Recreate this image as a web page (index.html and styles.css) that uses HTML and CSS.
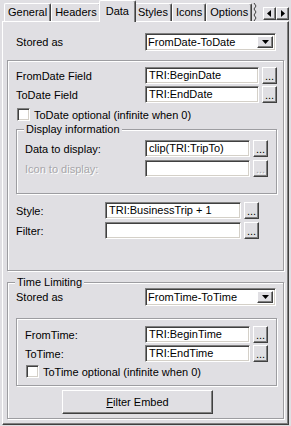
FILE: index.html
```html
<!DOCTYPE html>
<html lang="en">
<head>
  <meta charset="UTF-8" />
  <title>Data</title>
  <link rel="stylesheet" href="styles.css">
</head>
<body>

<div class="tabs">
  <div class="tab">General</div>
  <div class="tab">Headers</div>
  <div class="tab tab-active">Data</div>
  <div class="tab">Styles</div>
  <div class="tab">Icons</div>
  <div class="tab">Options</div>
  <svg class="tab-cut" width="5" height="18" viewBox="0 0 5 18">
    <polyline points="1,0 3,3 1,6 3,9 1,12 3,15 1,18" fill="none" stroke="#404040" stroke-width="1"/>
  </svg>
  <div class="tab-scroll">
    <span class="arrow-btn">
      <svg width="5" height="7" viewBox="0 0 5 7"><polygon points="4,0 4,7 0,3.5" fill="#000"/></svg>
    </span>
    <span class="arrow-btn">
      <svg width="5" height="7" viewBox="0 0 5 7"><polygon points="1,0 1,7 5,3.5" fill="#000"/></svg>
    </span>
  </div>
</div>

<div class="panel">
  <div class="row row-combo first-row">
    <span class="label label-wide">Stored as</span>
    <div class="combo">
      <span class="combo-text">FromDate-ToDate</span>
      <span class="combo-btn">
        <svg width="7" height="4" viewBox="0 0 7 4"><polygon points="0,0 7,0 3.5,4" fill="#000"/></svg>
      </span>
    </div>
  </div>

  <div class="group group-dates">
    <div class="row">
      <span class="label label-wide">FromDate Field</span>
      <div class="field field-long">TRI:BeginDate</div>
      <span class="btn btn-browse">...</span>
    </div>
    <div class="row row-next">
      <span class="label label-wide">ToDate Field</span>
      <div class="field field-long">TRI:EndDate</div>
      <span class="btn btn-browse">...</span>
    </div>
    <div class="check-row check-row-dates">
      <span class="check"></span>
      <span>ToDate optional (infinite when 0)</span>
    </div>

    <div class="group group-inner group-display">
      <span class="caption">Display information</span>
      <div class="row">
        <span class="label label-inner">Data to display:</span>
        <div class="field field-short">clip(TRI:TripTo)</div>
        <span class="btn btn-browse">...</span>
      </div>
      <div class="row row-spaced">
        <span class="label label-inner disabled">Icon to display:</span>
        <div class="field field-short"></div>
        <span class="btn btn-browse disabled">...</span>
      </div>
    </div>

    <div class="row row-style">
      <span class="label label-short">Style:</span>
      <div class="field field-style">TRI:BusinessTrip + 1</div>
      <span class="btn btn-browse">...</span>
    </div>
    <div class="row row-spaced">
      <span class="label label-short">Filter:</span>
      <div class="field field-style"></div>
      <span class="btn btn-browse">...</span>
    </div>
  </div>

  <div class="group group-time">
    <span class="caption">Time Limiting</span>
    <div class="row row-combo row-combo-grouped">
      <span class="label label-wide">Stored as</span>
      <div class="combo">
        <span class="combo-text">FromTime-ToTime</span>
        <span class="combo-btn">
          <svg width="7" height="4" viewBox="0 0 7 4"><polygon points="0,0 7,0 3.5,4" fill="#000"/></svg>
        </span>
      </div>
    </div>

    <div class="group group-inner group-times">
      <div class="row">
        <span class="label label-inner">FromTime:</span>
        <div class="field field-short">TRI:BeginTime</div>
        <span class="btn btn-browse">...</span>
      </div>
      <div class="row row-next">
        <span class="label label-inner">ToTime:</span>
        <div class="field field-short">TRI:EndTime</div>
        <span class="btn btn-browse">...</span>
      </div>
      <div class="check-row check-row-times">
        <span class="check"></span>
        <span>ToTime optional (infinite when 0)</span>
      </div>
    </div>

    <div class="btn btn-embed"><u>F</u>ilter Embed</div>
  </div>
</div>

</body>
</html>
```

FILE: styles.css
```css
body {
  margin: 0;
  width: 291px;
  height: 426px;
  overflow: hidden;
  background: #e0dfe3;
  font-family: "Liberation Sans", Arial, sans-serif;
  font-size: 11px;
  color: #000;
}

/* tab strip */
.tabs {
  display: flex;
  align-items: flex-end;
  height: 21px;
  padding-left: 4px;
}
.tab {
  height: 18px;
  box-sizing: border-box;
  padding: 0 3px;
  line-height: 17px;
  white-space: nowrap;
  border-left: 1px solid #fff;
  border-top: 1px solid #fff;
  border-right: 1px solid #404040;
  border-radius: 2px 2px 0 0;
  box-shadow: inset -1px 0 #808080;
}
.tab-active {
  height: 22px;
  margin: 0 -2px -1px;
  padding: 2px 6px 0;
  position: relative;
  z-index: 1;
  background: #e0dfe3;
}
.tab-cut {
  flex: none;
  margin-left: 1px;
  align-self: flex-end;
}
.tab-scroll {
  display: flex;
  margin-left: auto;
  margin-right: 2px;
  align-self: flex-start;
  margin-top: 7px;
}
.arrow-btn {
  width: 13px;
  height: 13px;
  box-sizing: border-box;
  display: flex;
  align-items: center;
  justify-content: center;
  border: 1px solid;
  border-color: #fff #404040 #404040 #fff;
  box-shadow: inset -1px -1px #808080;
}

/* page */
.panel {
  margin-left: 2px;
  width: 287px;
  height: 404px;
  box-sizing: border-box;
  padding-left: 4px;
  border: 1px solid;
  border-color: #fff #404040 #404040 #fff;
  box-shadow: inset -1px -1px #808080;
}

.row {
  display: flex;
  align-items: center;
  height: 17px;
  white-space: nowrap;
}
.row-next {
  margin-top: 2px;
}
.row-spaced {
  margin-top: 3px;
}
.row-combo {
  height: 18px;
  padding-left: 9px;
}
.row-combo-grouped {
  padding-left: 0;
}
.first-row {
  margin-top: 11px;
}
.row-style {
  margin-top: 8px;
}

.label {
  flex: none;
}
.label-wide {
  width: 129px;
}
.label-inner {
  width: 120px;
}
.label-short {
  width: 89px;
}
.disabled {
  color: #a7a6aa;
  text-shadow: 1px 1px 0 #fff;
}

.field {
  height: 17px;
  box-sizing: border-box;
  background: #fff;
  padding-left: 3px;
  line-height: 15px;
  border: 1px solid;
  border-color: #808080 #fff #fff #808080;
  box-shadow: inset 1px 1px #404040, inset -1px -1px #d4d0c8;
  overflow: hidden;
}
.field-long {
  width: 114px;
}
.field-short {
  width: 105px;
}
.field-style {
  width: 136px;
}

.btn {
  box-sizing: border-box;
  border: 1px solid;
  border-color: #fff #404040 #404040 #fff;
  box-shadow: inset -1px -1px #808080;
  text-align: center;
}
.btn-browse {
  width: 15px;
  height: 17px;
  margin-left: 3px;
  line-height: 17px;
}
.btn-embed {
  width: 151px;
  height: 24px;
  margin: 4px 0 0 46px;
  line-height: 22px;
}

.combo {
  display: flex;
  width: 131px;
  height: 18px;
  box-sizing: border-box;
  background: #fff;
  border: 1px solid;
  border-color: #808080 #fff #fff #808080;
  box-shadow: inset 1px 1px #404040, inset -1px -1px #d4d0c8;
  padding: 2px;
}
.combo-text {
  flex: 1;
  line-height: 12px;
}
.combo-btn {
  width: 16px;
  box-sizing: border-box;
  display: flex;
  align-items: center;
  justify-content: center;
  background: #e0dfe3;
  border: 1px solid;
  border-color: #fff #404040 #404040 #fff;
  box-shadow: inset -1px -1px #808080;
}

.check-row {
  display: flex;
  align-items: center;
  height: 13px;
  white-space: nowrap;
}
.check-row-dates {
  margin-top: 5px;
}
.check-row-times {
  margin-top: 3px;
}
.check {
  width: 13px;
  height: 13px;
  box-sizing: border-box;
  margin: 0 4px 0 1px;
  background: #fff;
  border: 1px solid;
  border-color: #808080 #fff #fff #808080;
  box-shadow: inset 1px 1px #404040, inset -1px -1px #d4d0c8;
}

/* group boxes */
.group {
  position: relative;
  box-sizing: border-box;
  border: 1px solid #9d9da1;
  box-shadow: 1px 1px 0 #fff, inset 1px 1px 0 #fff;
  padding-left: 8px;
}
.caption {
  position: absolute;
  top: -7px;
  left: 7px;
  padding: 0 2px;
  line-height: 13px;
  background: #e0dfe3;
  white-space: nowrap;
}
.group-dates {
  width: 277px;
  height: 211px;
  margin-top: 9px;
  padding-top: 6px;
}
.group-inner {
  width: 261px;
}
.group-display {
  height: 65px;
  margin-top: 8px;
  padding-top: 10px;
}
.group-time {
  width: 277px;
  height: 137px;
  margin-top: 11px;
  padding-top: 5px;
}
.group-times {
  height: 68px;
  margin-top: 12px;
  padding-top: 7px;
}
```
